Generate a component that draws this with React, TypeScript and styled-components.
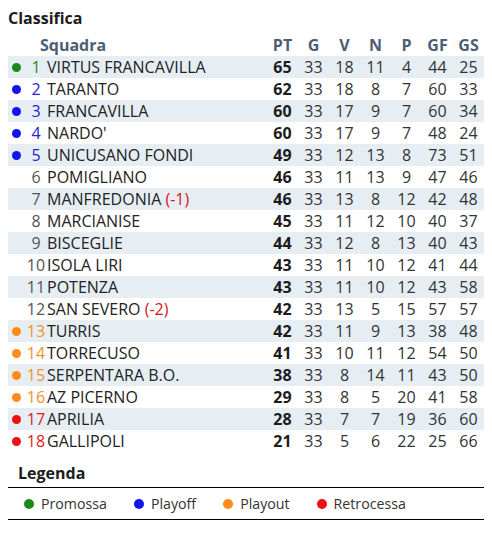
import React from 'react'
import styled, { createGlobalStyle } from 'styled-components'

const GlobalStyle = createGlobalStyle`
	body {
		margin: 8px;
		background: #fff;
		font-family: 'Open Sans', 'Noto Sans', sans-serif;
		color: #222;
	}
`

type Zone = 'promo' | 'playoff' | 'playout' | 'retro' | 'none'

const dotColors: Record<Zone, string> = {
	promo: '#1b8a1b',
	playoff: '#1313ee',
	playout: '#ff8c1a',
	retro: '#ee1111',
	none: 'transparent',
}

const numColors: Record<Zone, string> = {
	promo: '#2a8a2a',
	playoff: '#2626c8',
	playout: '#f0922a',
	retro: '#e01a1a',
	none: '#555',
}

type Team = {
	pos: number
	name: string
	penalty?: string
	zone: Zone
	stats: number[]
}

const teams: Team[] = [
	{ pos: 1, name: 'VIRTUS FRANCAVILLA', zone: 'promo', stats: [65, 33, 18, 11, 4, 44, 25] },
	{ pos: 2, name: 'TARANTO', zone: 'playoff', stats: [62, 33, 18, 8, 7, 60, 33] },
	{ pos: 3, name: 'FRANCAVILLA', zone: 'playoff', stats: [60, 33, 17, 9, 7, 60, 34] },
	{ pos: 4, name: "NARDO'", zone: 'playoff', stats: [60, 33, 17, 9, 7, 48, 24] },
	{ pos: 5, name: 'UNICUSANO FONDI', zone: 'playoff', stats: [49, 33, 12, 13, 8, 73, 51] },
	{ pos: 6, name: 'POMIGLIANO', zone: 'none', stats: [46, 33, 11, 13, 9, 47, 46] },
	{ pos: 7, name: 'MANFREDONIA', penalty: '(-1)', zone: 'none', stats: [46, 33, 13, 8, 12, 42, 48] },
	{ pos: 8, name: 'MARCIANISE', zone: 'none', stats: [45, 33, 11, 12, 10, 40, 37] },
	{ pos: 9, name: 'BISCEGLIE', zone: 'none', stats: [44, 33, 12, 8, 13, 40, 43] },
	{ pos: 10, name: 'ISOLA LIRI', zone: 'none', stats: [43, 33, 11, 10, 12, 41, 44] },
	{ pos: 11, name: 'POTENZA', zone: 'none', stats: [43, 33, 11, 10, 12, 43, 58] },
	{ pos: 12, name: 'SAN SEVERO', penalty: '(-2)', zone: 'none', stats: [42, 33, 13, 5, 15, 57, 57] },
	{ pos: 13, name: 'TURRIS', zone: 'playout', stats: [42, 33, 11, 9, 13, 38, 48] },
	{ pos: 14, name: 'TORRECUSO', zone: 'playout', stats: [41, 33, 10, 11, 12, 54, 50] },
	{ pos: 15, name: 'SERPENTARA B.O.', zone: 'playout', stats: [38, 33, 8, 14, 11, 43, 50] },
	{ pos: 16, name: 'AZ PICERNO', zone: 'playout', stats: [29, 33, 8, 5, 20, 41, 58] },
	{ pos: 17, name: 'APRILIA', zone: 'retro', stats: [28, 33, 7, 7, 19, 36, 60] },
	{ pos: 18, name: 'GALLIPOLI', zone: 'retro', stats: [21, 33, 5, 6, 22, 25, 66] },
]

const columns = ['PT', 'G', 'V', 'N', 'P', 'GF', 'GS']

const legend: { zone: Zone; label: string }[] = [
	{ zone: 'promo', label: 'Promossa' },
	{ zone: 'playoff', label: 'Playoff' },
	{ zone: 'playout', label: 'Playout' },
	{ zone: 'retro', label: 'Retrocessa' },
]

const Title = styled.h2`
	margin: 0 0 6px;
	font-size: 16px;
	font-weight: 700;
	line-height: 21px;
	color: #1c1c1c;
`

const Table = styled.div`
	display: flex;
	flex-direction: column;
	width: 476px;
`

const HeaderRow = styled.div`
	display: grid;
	grid-template-columns: 32px 1fr repeat(7, 31px);
	height: 21px;
	line-height: 21px;
	font-size: 16px;
	font-weight: 700;
	color: #4b5e74;
`

const HeaderCell = styled.div<{ $center?: boolean }>`
	text-align: ${({ $center }) => ($center ? 'center' : 'left')};
`

const Row = styled.div<{ $striped: boolean }>`
	display: grid;
	grid-template-columns: 39px 1fr repeat(7, 31px);
	height: 22px;
	line-height: 22px;
	font-size: 16px;
	background: ${({ $striped }) => ($striped ? '#e6eef4' : 'transparent')};
`

const PosCell = styled.div`
	display: flex;
	align-items: center;
`

const Dot = styled.span<{ $zone: Zone }>`
	display: inline-block;
	width: 9px;
	height: 9px;
	border-radius: 50%;
	margin-left: 4px;
	flex: none;
	background: ${({ $zone }) => dotColors[$zone]};
`

const PosNumber = styled.span<{ $zone: Zone }>`
	flex: 1;
	text-align: center;
	padding-left: 4px;
	color: ${({ $zone }) => numColors[$zone]};
`

const TeamName = styled.div`
	white-space: nowrap;
	color: #222;
`

const Penalty = styled.span`
	color: #d8101c;
`

const StatCell = styled.div<{ $bold?: boolean }>`
	text-align: center;
	font-weight: ${({ $bold }) => ($bold ? 700 : 400)};
	color: ${({ $bold }) => ($bold ? '#1c1c1c' : '#333')};
`

const LegendSection = styled.section`
	display: flex;
	flex-direction: column;
	margin-top: 10px;
`

const LegendTitle = styled.h3`
	margin: 0 0 3px 10px;
	font-size: 16px;
	font-weight: 700;
	line-height: 22px;
	color: #1c1c1c;
`

const LegendBox = styled.div`
	display: flex;
	align-items: center;
	gap: 27px;
	width: 482px;
	height: 33px;
	margin-left: -1px;
	padding: 0 16px;
	box-sizing: border-box;
	border: 1px solid #000;
	font-size: 14.2px;
	color: #333;
`

const LegendItem = styled.div`
	display: flex;
	align-items: center;
	gap: 7px;
`

const LegendDot = styled.span<{ $zone: Zone }>`
	flex: none;
	width: 10px;
	height: 10px;
	border-radius: 50%;
	background: ${({ $zone }) => dotColors[$zone]};
`

export default function App() {
	return (
		<>
			<GlobalStyle />
			<Title>Classifica</Title>
			<Table>
				<HeaderRow>
					<HeaderCell />
					<HeaderCell>Squadra</HeaderCell>
					{columns.map((c) => (
						<HeaderCell key={c} $center>
							{c}
						</HeaderCell>
					))}
				</HeaderRow>
				{teams.map((t, i) => (
					<Row key={t.pos} $striped={i % 2 === 0}>
						<PosCell>
							<Dot $zone={t.zone} />
							<PosNumber $zone={t.zone}>{t.pos}</PosNumber>
						</PosCell>
						<TeamName>
							{t.name}
							{t.penalty && <Penalty> {t.penalty}</Penalty>}
						</TeamName>
						{t.stats.map((s, j) => (
							<StatCell key={j} $bold={j === 0}>
								{s}
							</StatCell>
						))}
					</Row>
				))}
			</Table>
			<LegendSection>
				<LegendTitle>Legenda</LegendTitle>
				<LegendBox>
					{legend.map((l) => (
						<LegendItem key={l.zone}>
							<LegendDot $zone={l.zone} />
							{l.label}
						</LegendItem>
					))}
				</LegendBox>
			</LegendSection>
		</>
	)
}
